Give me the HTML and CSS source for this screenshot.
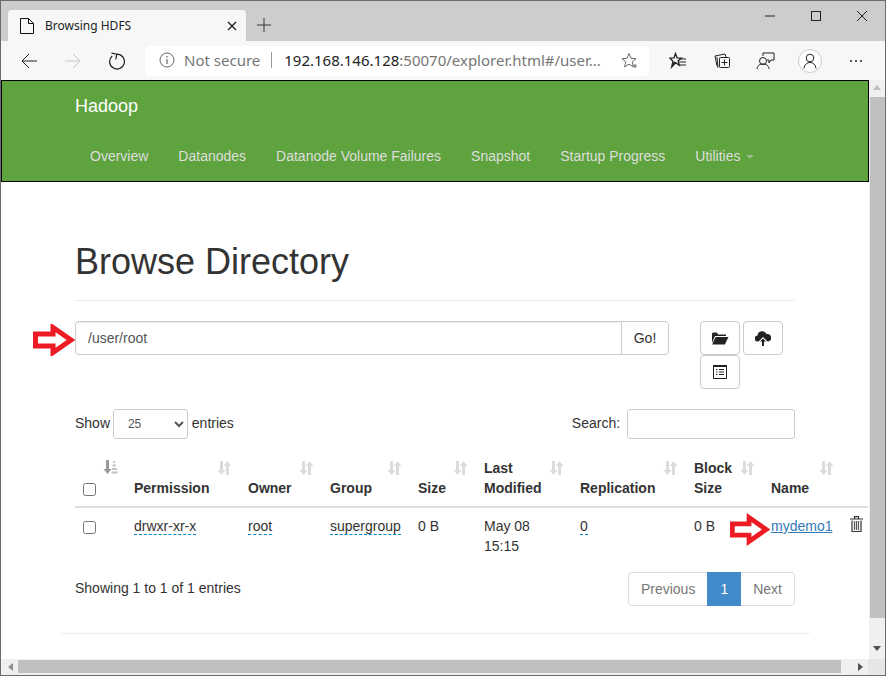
FILE: index.html
```html
<!DOCTYPE html>
<html lang="en">
<head>
  <meta charset="UTF-8">
  <meta name="viewport" content="width=device-width, initial-scale=1.0">
  <title>Browsing HDFS</title>
  <link rel="stylesheet" href="styles.css">
</head>
<body>

<svg class="defs" width="0" height="0" aria-hidden="true">
  <symbol id="sort" viewBox="0 0 15 14">
    <path d="M3 0h3v9h2.500L4.500 14 .5 9H3zM9 14h3V5h2.500L10.500 0l-4 5H9z" fill="currentColor"/>
  </symbol>
  <symbol id="redarrow" viewBox="0 0 42 32">
    <path d="M2.500 10H20V3.500L38 16 20 28.500V22H2.500z" fill="#fff" stroke="#ed1c24" stroke-width="5" stroke-linejoin="miter"/>
  </symbol>
</svg>

<div class="window">
  <div class="tabstrip">
    <div class="tab">
      <svg class="tab-doc" width="14" height="16" viewBox="0 0 14 16"><path d="M.5.5h8l5 5v10H.5zM8.500.5v5h5" fill="none" stroke="#111"/></svg>
      <span class="tab-title">Browsing HDFS</span>
      <svg width="10" height="10" viewBox="0 0 10 10"><path d="M1 1l8 8M9 1l-8 8" stroke="#222" stroke-width="1.400"/></svg>
    </div>
    <svg class="newtab" width="14" height="14" viewBox="0 0 14 14"><path d="M7 0v14M0 7h14" stroke="#333"/></svg>
    <div class="winctl">
      <svg width="12" height="12" viewBox="0 0 12 12"><path d="M1 6h10" stroke="#222"/></svg>
      <svg width="12" height="12" viewBox="0 0 12 12"><rect x="1.500" y="1.500" width="9" height="9" fill="none" stroke="#222"/></svg>
      <svg width="12" height="12" viewBox="0 0 12 12"><path d="M1 1l10 10M11 1L1 11" stroke="#222"/></svg>
    </div>
  </div>

  <div class="toolbar">
    <svg class="tool" width="16" height="16" viewBox="0 0 16 16"><path d="M16 8H1M8 1L1 8l7 7" fill="none" stroke="#222"/></svg>
    <svg class="tool" width="16" height="16" viewBox="0 0 16 16"><path d="M0 8h15M8 1l7 7-7 7" fill="none" stroke="#c4c4c4"/></svg>
    <svg class="tool" width="16" height="18" viewBox="0 0 16 18"><path d="M3.200 4A7.400 7.400 0 1 0 8 2.200M2.500 1.200L7.800 2.200 6.800 7.500" fill="none" stroke="#222" stroke-width="1.200"/></svg>
    <div class="omnibox">
      <svg width="16" height="16" viewBox="0 0 16 16"><circle cx="8" cy="8" r="7" fill="none" stroke="#666"/><path d="M8 7v5M8 4v1.500" stroke="#666" stroke-width="1.200"/></svg>
      <span class="notsecure">Not secure</span>
      <span class="omni-sep"></span>
      <span class="url"><span class="host">192.168.146.128</span>:50070/explorer.html#/user...</span>
      <svg class="omni-star" width="17" height="17" viewBox="0 0 17 17"><path d="M8 1.500l2 4.800 5 .4-3.800 3.200 1.200 5L8 12.200l-4.400 2.700 1.200-5L1 6.700l5-.4z" fill="none" stroke="#666"/><path d="M12 14h4M14 12v4" stroke="#666"/></svg>
    </div>
    <div class="tool-right">
      <svg width="18" height="18" viewBox="0 0 18 18"><path d="M6.500 1.500l1.600 4.300 4.400.2-3.400 2.800 1.200 4.400-3.800-2.500L2.700 15l1.200-5.700L.8 6l4.200-.2z" fill="none" stroke="#222" stroke-width="1.300"/><path d="M3.500 13L5 9l1.500 2z" fill="#222"/><path d="M11 7h6M10 10h7M10 13h7" stroke="#222"/></svg>
      <svg class="wider" width="18" height="18" viewBox="0 0 18 18"><path d="M3 14L1 4l10-2 1 3" fill="none" stroke="#222"/><path d="M3 5l1 11" fill="none" stroke="#222"/><rect x="5.500" y="5.500" width="10" height="10" rx="1" fill="#f7f7f7" stroke="#222"/><path d="M10.500 7.500v6M7.500 10.500h6" stroke="#222"/></svg>
      <svg width="20" height="18" viewBox="0 0 20 18"><path d="M7 4V1h11v7h-3l-2 3v-3h-2" fill="none" stroke="#222"/><circle cx="7" cy="9" r="3.500" fill="#f7f7f7" stroke="#222"/><path d="M1 17c.5-4 3-5 6-5s5.500 1 6 5" fill="none" stroke="#222"/></svg>
      <span class="avatar">
        <svg width="14" height="16" viewBox="0 0 14 16"><circle cx="7" cy="5" r="3.800" fill="none" stroke="#222"/><path d="M1 15.500c.5-4 3-6 6-6s5.500 2 6 6" fill="none" stroke="#222"/></svg>
      </span>
      <svg class="wider" width="14" height="4" viewBox="0 0 14 4"><circle cx="2" cy="2" r="1" fill="#222"/><circle cx="7" cy="2" r="1" fill="#222"/><circle cx="12" cy="2" r="1" fill="#222"/></svg>
    </div>
  </div>

  <div class="viewport">
    <div class="viewport-top">
      <div class="page">
        <div class="navbar">
          <div class="brand">Hadoop</div>
          <ul class="navlinks">
            <li>Overview</li>
            <li>Datanodes</li>
            <li>Datanode Volume Failures</li>
            <li>Snapshot</li>
            <li>Startup Progress</li>
            <li>Utilities <span class="caret"></span></li>
          </ul>
        </div>

        <div class="container">
          <h1 class="page-title">Browse Directory</h1>

          <div class="path-row">
            <svg class="arrow-path" width="42" height="32"><use href="#redarrow"/></svg>
            <div class="path-group">
              <input class="path-input" type="text" value="/user/root">
              <button class="go-btn">Go!</button>
            </div>
            <div class="actions">
              <button class="icon-btn">
                <svg width="18" height="14" viewBox="0 0 18 14"><path d="M1 2.500V12L4 5h11V3.500H7L6 1.500H2zM4.600 6L1.200 13.500h12.600L17.500 6z" fill="#222"/></svg>
              </button>
              <button class="icon-btn">
                <svg width="16" height="15" viewBox="0 0 16 15"><path d="M3.500 10.500H3A3 3 0 0 1 2.500 4.500 4.800 4.800 0 0 1 11.600 3 3.800 3.800 0 0 1 13 10.500h-.5L8 6z" fill="#222"/><path d="M8 7.500l3 3H9V15H7v-4.500H5z" fill="#222"/></svg>
              </button>
              <button class="icon-btn">
                <svg width="14" height="14" viewBox="0 0 14 14"><rect x=".5" y=".5" width="13" height="13" fill="#fff" stroke="#222"/><path d="M0 0h14v2H0z" fill="#222"/><path d="M3 4.500h1.500M6 4.500h5M3 7h1.500M6 7h5M3 9.500h1.500M6 9.500h5" stroke="#222"/></svg>
              </button>
            </div>
          </div>

          <div class="table-controls">
            <label class="length">Show
              <select class="length-select"><option>25</option></select>
              entries</label>
            <label class="search">Search: <input class="search-input" type="text"></label>
          </div>

          <table class="files">
            <colgroup>
              <col class="c-check"><col class="c-perm"><col class="c-owner"><col class="c-group"><col class="c-size">
              <col class="c-mod"><col class="c-repl"><col class="c-block"><col class="c-name"><col class="c-del">
            </colgroup>
            <thead>
              <tr>
                <th><input type="checkbox">
                  <svg class="sort-icon sort-active" width="15" height="14" viewBox="0 0 15 14"><path d="M3 0h3v9h2.500L4.500 14 .5 9H3z" fill="currentColor"/><path d="M10 1h2v2h-2zM9.500 4.500h3.500v2H9.500zM9 8h5v2H9zM8.500 11.500h6v2h-6z" fill="#c4c4c4"/></svg>
                </th>
                <th>Permission <svg class="sort-icon"><use href="#sort"/></svg></th>
                <th>Owner <svg class="sort-icon"><use href="#sort"/></svg></th>
                <th>Group <svg class="sort-icon"><use href="#sort"/></svg></th>
                <th>Size <svg class="sort-icon"><use href="#sort"/></svg></th>
                <th>Last Modified <svg class="sort-icon"><use href="#sort"/></svg></th>
                <th>Replication <svg class="sort-icon"><use href="#sort"/></svg></th>
                <th>Block Size <svg class="sort-icon"><use href="#sort"/></svg></th>
                <th>Name <svg class="sort-icon"><use href="#sort"/></svg></th>
                <th></th>
              </tr>
            </thead>
            <tbody>
              <tr>
                <td><input type="checkbox"></td>
                <td><span class="editable">drwxr-xr-x</span></td>
                <td><span class="editable">root</span></td>
                <td><span class="editable">supergroup</span></td>
                <td>0 B</td>
                <td>May 08 15:15</td>
                <td><span class="editable">0</span></td>
                <td>0 B</td>
                <td class="name-cell">
                  <svg class="arrow-name" width="40" height="33"><use href="#redarrow"/></svg>
                  <a href="#">mydemo1</a>
                </td>
                <td>
                  <svg width="13" height="16" viewBox="0 0 13 16"><path d="M4.500 2.500V.7h4v1.800M0 3h13" fill="none" stroke="#333" stroke-width="1.200"/><path d="M2 4.500v11h9v-11" fill="#fff" stroke="#333" stroke-width="1.200"/><path d="M4.500 5v9M6.500 5v9M8.500 5v9" stroke="#555" stroke-width="1.200"/></svg>
                </td>
              </tr>
            </tbody>
          </table>

          <div class="table-footer">
            <div class="info">Showing 1 to 1 of 1 entries</div>
            <ul class="pagination">
              <li>Previous</li>
              <li class="active">1</li>
              <li>Next</li>
            </ul>
          </div>
        </div>
        <hr class="foot-rule">
      </div>

      <div class="vscroll">
        <span class="tri tri-up"></span>
        <div class="vthumb"></div>
        <span class="tri tri-down"></span>
      </div>
    </div>

    <div class="hscroll">
      <span class="tri tri-left"></span>
      <div class="hthumb"></div>
      <span class="tri tri-right"></span>
      <div class="corner"></div>
    </div>
  </div>
</div>

</body>
</html>
```

FILE: styles.css
```css
html, body {
  margin: 0;
  padding: 0;
  height: 676px;
  overflow: hidden;
  background: #fff;
  font-family: "Liberation Sans", Arial, sans-serif;
  font-size: 14px;
  color: #333;
}
.defs {
  position: absolute;
}
.window {
  box-sizing: border-box;
  width: 886px;
  height: 676px;
  border: 1px solid #6b6b6b;
  display: flex;
  flex-direction: column;
  overflow: hidden;
}

/* browser chrome */
.tabstrip {
  height: 40px;
  background: #cdcdcd;
  display: flex;
  align-items: flex-end;
  flex-shrink: 0;
}
.tab {
  box-sizing: border-box;
  width: 238px;
  height: 31px;
  margin-left: 7px;
  padding: 0 9px 0 12px;
  background: #f7f7f7;
  border-radius: 4px 4px 0 0;
  display: flex;
  align-items: center;
  font-family: "Noto Sans", sans-serif;
  font-size: 12px;
  color: #222;
}
.tab-doc {
  margin-right: 11px;
}
.tab-title {
  flex: 1;
}
.newtab {
  margin: 0 0 9px 11px;
}
.winctl {
  margin-left: auto;
  align-self: flex-start;
  display: flex;
  gap: 34px;
  padding: 9px 17px 0 0;
}
.toolbar {
  height: 39px;
  background: #f7f7f7;
  display: flex;
  align-items: center;
  flex-shrink: 0;
}
.tool {
  margin-left: 20px;
}
.tool + .tool {
  margin-left: 28px;
}
.omnibox {
  box-sizing: border-box;
  width: 504px;
  height: 30px;
  margin-left: 20px;
  padding: 0 11px 1px 14px;
  background: #fff;
  border-radius: 4px;
  display: flex;
  align-items: center;
  font-family: "Noto Sans", sans-serif;
  font-size: 15px;
  line-height: 28px;
  color: #767676;
  white-space: nowrap;
}
.notsecure {
  margin-left: 9px;
}
.omni-sep {
  width: 1px;
  height: 16px;
  background: #999;
  margin: 0 12px 0 11px;
}
.host {
  color: #222;
}
.omni-star {
  margin-left: auto;
}
.tool-right {
  flex: 1;
  display: flex;
  align-items: center;
  gap: 24px;
  padding-left: 20px;
}
.wider {
  margin-left: 3px;
}
.avatar {
  box-sizing: border-box;
  width: 24px;
  height: 24px;
  border: 1px solid #ccc;
  border-radius: 50%;
  background: #fff;
  display: flex;
  align-items: center;
  justify-content: center;
  margin-left: -2px;
}

/* page area */
.viewport {
  flex: 1;
  min-height: 0;
  display: flex;
  flex-direction: column;
}
.viewport-top {
  flex: 1;
  min-height: 0;
  display: flex;
}
.page {
  flex: 1;
  min-width: 0;
  overflow: hidden;
}
.navbar {
  height: 102px;
  box-sizing: border-box;
  background: #5fa33e;
  border: 1px solid #000;
  padding-left: 73px;
}
.brand {
  height: 50px;
  line-height: 50px;
  font-size: 18px;
  color: #fff;
}
.navlinks {
  list-style: none;
  margin: 0;
  padding: 0;
  display: flex;
}
.navlinks li {
  padding: 15px;
  line-height: 20px;
  color: #ddd;
}
.caret {
  display: inline-block;
  margin-left: 2px;
  vertical-align: middle;
  border-top: 4px solid #9ab98a;
  border-left: 4px solid transparent;
  border-right: 4px solid transparent;
}
.container {
  padding-left: 74px;
}
.page-title {
  width: 720px;
  margin: 0;
  padding: 60px 0 18px;
  border-bottom: 1px solid #eee;
  font-size: 36px;
  font-weight: 500;
  line-height: 40px;
  height: 40px;
}
.path-row {
  position: relative;
  display: flex;
  padding-top: 20px;
}
.arrow-path {
  position: absolute;
  left: -42px;
  top: 23px;
}
.path-group {
  display: flex;
  width: 594px;
  height: 34px;
}
.path-input {
  box-sizing: border-box;
  flex: 1;
  min-width: 0;
  height: 34px;
  padding: 6px 12px;
  border: 1px solid #ccc;
  border-radius: 4px 0 0 4px;
  box-shadow: inset 0 1px 1px rgba(0,0,0,0.075);
  font-family: inherit;
  font-size: 14px;
  color: #555;
}
.go-btn {
  width: 48px;
  margin-left: -1px;
  border: 1px solid #ccc;
  border-radius: 0 4px 4px 0;
  background: #fff;
  font-family: inherit;
  font-size: 14px;
  color: #333;
}
.actions {
  width: 86px;
  margin-left: 31px;
  display: flex;
  flex-wrap: wrap;
  column-gap: 3px;
}
.icon-btn {
  box-sizing: border-box;
  width: 40px;
  height: 34px;
  padding: 0;
  border: 1px solid #ccc;
  border-radius: 4px;
  background: #fff;
  display: flex;
  align-items: center;
  justify-content: center;
}
.table-controls {
  width: 720px;
  margin-top: 20px;
  display: flex;
  justify-content: space-between;
  align-items: center;
  height: 30px;
}
.length-select {
  box-sizing: border-box;
  width: 75px;
  height: 30px;
  margin: 0 0 0 -1px;
  padding: 5px 10px;
  border: 1px solid #ccc;
  border-radius: 3px;
  background: #fff;
  font-family: inherit;
  font-size: 12px;
  color: #555;
}
.search-input {
  box-sizing: border-box;
  width: 168px;
  height: 30px;
  margin-left: 3px;
  border: 1px solid #ccc;
  border-radius: 3px;
  vertical-align: middle;
}
.files {
  table-layout: fixed;
  width: 793px;
  margin-top: 11px;
  border-collapse: collapse;
  line-height: 20px;
}
.c-check { width: 51px; }
.c-perm { width: 114px; }
.c-owner { width: 82px; }
.c-group { width: 88px; }
.c-size { width: 66px; }
.c-mod { width: 96px; }
.c-repl { width: 114px; }
.c-block { width: 77px; }
.c-name { width: 79px; }
.c-del { width: 26px; }
.files th {
  position: relative;
  padding: 8px;
  border-bottom: 2px solid #ddd;
  text-align: left;
  vertical-align: bottom;
  font-weight: bold;
}
.files th:last-child {
  padding: 0;
}
.files td {
  padding: 8px;
  vertical-align: top;
}
.files td:last-child {
  padding: 8px 0 8px 8px;
}
.files input[type="checkbox"] {
  margin: 0;
  vertical-align: middle;
}
.sort-icon {
  position: absolute;
  top: 11px;
  right: 8px;
  width: 15px;
  height: 14px;
  color: #dcdcdc;
}
.sort-active {
  color: #999;
  top: 10px;
  right: auto;
  left: 28px;
}
.editable {
  border-bottom: 1px dashed #08c;
}
.name-cell {
  position: relative;
}
.name-cell a {
  color: #337ab7;
}
.arrow-name {
  position: absolute;
  left: -33px;
  top: 5px;
}
.table-footer {
  width: 720px;
  margin-top: 8px;
  display: flex;
  justify-content: space-between;
  align-items: flex-start;
}
.info {
  padding-top: 6px;
  line-height: 20px;
}
.pagination {
  list-style: none;
  margin: 0;
  padding: 0;
  display: flex;
  border: 1px solid #ddd;
  border-radius: 4px;
  height: 32px;
  line-height: 32px;
  color: #777;
}
.pagination li {
  padding: 0 12px;
}
.pagination .active {
  margin: -1px 0;
  padding: 0 13px;
  height: 34px;
  line-height: 34px;
  background: #428bca;
  color: #fff;
}
.foot-rule {
  width: 750px;
  height: 1px;
  margin: 27px 0 0 59px;
  border: 0;
  background: #eee;
}

/* scrollbars */
.vscroll {
  width: 16px;
  background: #f0f0f0;
  display: flex;
  flex-direction: column;
  align-items: center;
  flex-shrink: 0;
}
.vthumb {
  width: 15px;
  height: 521px;
  background: #c0c0c0;
  margin-left: 1px;
}
.hscroll {
  height: 16px;
  background: #f0f0f0;
  display: flex;
  align-items: center;
  flex-shrink: 0;
}
.hthumb {
  width: 823px;
  height: 13px;
  margin-bottom: 1px;
  background: #c0c0c0;
}
.corner {
  width: 17px;
  height: 16px;
  background: #e6e6e6;
  margin-left: auto;
}
.tri {
  display: block;
  width: 0;
  height: 0;
  border: 4px solid transparent;
}
.tri-up {
  margin: 5px 0 7px;
  border-top: 0;
  border-bottom: 5px solid #c0c0c0;
}
.tri-down {
  margin-top: 28px;
  border-bottom: 0;
  border-top: 5px solid #505050;
}
.tri-left {
  margin: 0 5px 0 7px;
  border-left: 0;
  border-right: 5px solid #909090;
}
.tri-right {
  margin-left: 17px;
  border-right: 0;
  border-left: 5px solid #505050;
}
```
